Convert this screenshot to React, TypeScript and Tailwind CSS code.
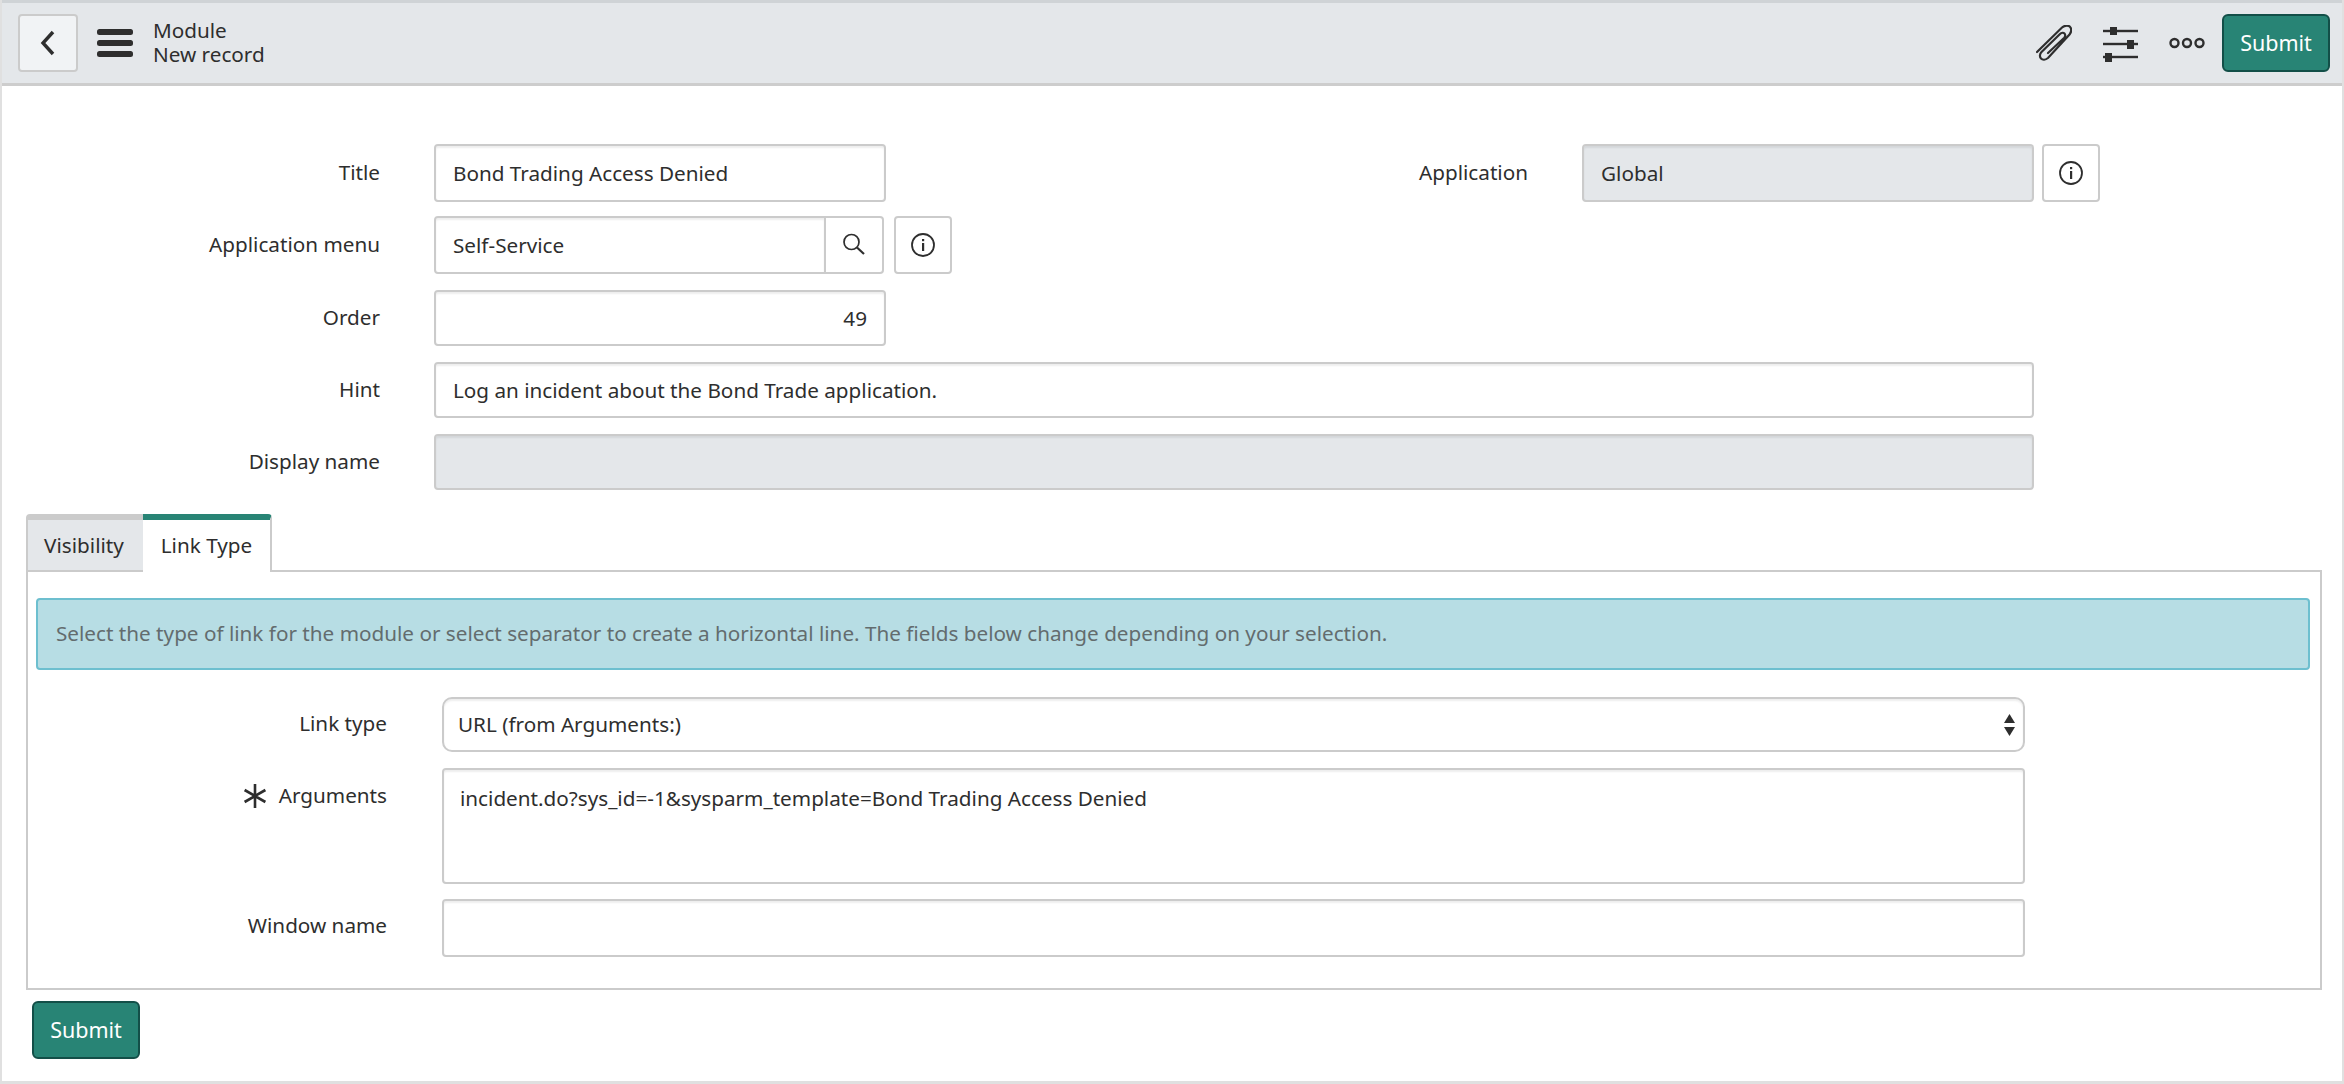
import type { ReactNode } from 'react';

const inputClass =
  'h-full rounded-[4px] border-2 border-[#cbcbcb] px-[17px] text-[20.7px] text-[#2e2e2e] shadow-[inset_0_2px_2px_rgba(0,0,0,0.07)] outline-none';

function InfoIcon() {
  return (
    <svg width="26" height="26" viewBox="0 0 26 26" fill="none" stroke="#2e2e2e">
      <circle cx="13" cy="13" r="11" strokeWidth="1.8" />
      <rect x="12" y="11" width="2.2" height="8" fill="#2e2e2e" stroke="none" />
      <rect x="12" y="7" width="2.2" height="2.2" fill="#2e2e2e" stroke="none" />
    </svg>
  );
}

function InfoButton() {
  return (
    <button className="flex h-[58px] w-[58px] items-center justify-center rounded-[4px] border-2 border-[#cbcbcb] bg-white">
      <InfoIcon />
    </button>
  );
}

function SubmitButton() {
  return (
    <button className="h-[58px] w-[108px] rounded-[6px] border-2 border-[#134f48] bg-[#288475] text-[21.5px] text-white">
      Submit
    </button>
  );
}

function Row({ label, height, children }: { label: string; height: string; children: ReactNode }) {
  return (
    <div className={`flex items-center ${height}`}>
      <label className="w-[378px] shrink-0 text-right text-[20.7px] text-[#2e2e2e]">{label}</label>
      <div className="ml-[54px] flex h-full items-stretch">{children}</div>
    </div>
  );
}

function TabRow({ label, height, children }: { label: ReactNode; height: string; children: ReactNode }) {
  return (
    <div className="flex items-start">
      <div className="flex h-[54px] w-[351px] shrink-0 items-center justify-end text-[20.7px] text-[#2e2e2e]">{label}</div>
      <div className={`ml-[55px] w-[1583px] ${height}`}>{children}</div>
    </div>
  );
}

export default function App() {
  return (
    <div
      className="flex h-[1084px] w-full flex-col border-x-2 border-b-[3px] border-[#e0e0e0] bg-white"
      style={{ fontFamily: '"Noto Sans", sans-serif' }}
    >
      <header className="flex h-[86px] shrink-0 items-center border-y-[3px] border-t-[#cfd3d6] border-b-[#cdcdcd] bg-[#e4e7ea] pl-[16px] pr-[12px]">
        <button className="flex h-[58px] w-[60px] items-center justify-center rounded-[4px] border-2 border-[#cbcbcb] bg-[#f1f3f5]">
          <svg width="18" height="26" viewBox="0 0 18 26" fill="none" stroke="#2e2e2e" strokeWidth="3.4">
            <path d="M14 2 4 13l10 11" />
          </svg>
        </button>
        <svg className="ml-[19px]" width="36" height="28" viewBox="0 0 36 28" fill="#2e2e2e">
          <rect y="0" width="36" height="6" rx="2.5" />
          <rect y="11" width="36" height="6" rx="2.5" />
          <rect y="22" width="36" height="6" rx="2.5" />
        </svg>
        <div className="-mt-[3px] ml-[20px] text-[20.7px] leading-[24px] text-[#2e2e2e]">
          <div>Module</div>
          <div>New record</div>
        </div>
        <div className="ml-auto flex items-center">
          <svg width="36" height="36" viewBox="0 0 36 36" fill="none" stroke="#2e2e2e" strokeWidth="2.2" strokeLinecap="round">
            <path d="M1 27 26 2.500c3-2.500 7-2.500 8.500 0s.5 5-1 7L12 33c-2.500 2-5.500 2-7 .5s-1.500-4.500.5-6.500L24 9c1.500-1.500 3.500-1.500 4.500-.5s1 3-.5 4.500L12 28" />
          </svg>
          <svg className="ml-[31px]" width="36" height="40" viewBox="0 0 36 40" fill="#2e2e2e">
            <rect y="6.800" width="35" height="2.400" />
            <rect x="7" y="4" width="7" height="8" />
            <rect y="19.800" width="35" height="2.400" />
            <rect x="24" y="17" width="7" height="9" />
            <rect y="32.800" width="35" height="2.400" />
            <rect x="2" y="30" width="7" height="9" />
          </svg>
          <svg className="ml-[30px]" width="36" height="12" viewBox="0 0 36 12" fill="none" stroke="#2e2e2e" strokeWidth="2.400">
            <circle cx="5.500" cy="6" r="4" />
            <circle cx="18" cy="6" r="4" />
            <circle cx="30.500" cy="6" r="4" />
          </svg>
          <div className="ml-[17px]">
            <SubmitButton />
          </div>
        </div>
      </header>

      <div className="flex flex-col pt-[58px]">
        <div className="flex h-[58px]">
          <div className="w-[1150px]">
            <Row label="Title" height="h-[58px]">
              <input readOnly value="Bond Trading Access Denied" className={`${inputClass} w-[452px] bg-white`} />
            </Row>
          </div>
          <label className="flex w-[376px] items-center justify-end text-[20.7px] text-[#2e2e2e]">Application</label>
          <input readOnly value="Global" className={`${inputClass} ml-[54px] w-[452px] bg-[#e4e7ea]`} />
          <div className="ml-[8px]">
            <InfoButton />
          </div>
        </div>

        <div className="mt-[14px]">
          <Row label="Application menu" height="h-[58px]">
            <div className="flex w-[450px]">
              <input readOnly value="Self-Service" className={`${inputClass} w-[392px] rounded-r-none bg-white`} />
              <button className="flex w-[58px] items-center justify-center rounded-r-[4px] border-2 border-l-0 border-[#cbcbcb] bg-white">
                <svg width="26" height="26" viewBox="0 0 26 26" fill="none" stroke="#2e2e2e" strokeWidth="1.7">
                  <circle cx="10.500" cy="10" r="7.500" />
                  <path d="m16 15.500 7 6.500" strokeWidth="2.200" />
                </svg>
              </button>
            </div>
            <div className="ml-[10px]">
              <InfoButton />
            </div>
          </Row>
        </div>

        <div className="mt-[16px]">
          <Row label="Order" height="h-[56px]">
            <input readOnly value="49" className={`${inputClass} w-[452px] bg-white text-right`} />
          </Row>
        </div>
        <div className="mt-[16px]">
          <Row label="Hint" height="h-[56px]">
            <input readOnly value="Log an incident about the Bond Trade application." className={`${inputClass} w-[1600px] bg-white`} />
          </Row>
        </div>
        <div className="mt-[16px]">
          <Row label="Display name" height="h-[56px]">
            <input readOnly value="" className={`${inputClass} w-[1600px] bg-[#e4e7ea]`} />
          </Row>
        </div>
      </div>

      <div className="ml-[24px] mr-[20px] mt-[24px] flex flex-col">
        <div className="relative z-10 flex h-[58px] items-stretch text-[20.7px] text-[#2e2e2e]">
          <div className="flex w-[119px] items-center justify-center rounded-tl-[4px] border-x-2 border-t-[6px] border-b-2 border-x-[#cbcbcb] border-t-[#cbcbcb] border-b-[#cbcbcb] bg-[#e4e7ea] pr-[3px] pt-[2px]">
            Visibility
          </div>
          <div className="-ml-[2px] flex w-[129px] items-center justify-center rounded-tr-[4px] border-r-2 border-t-[6px] border-r-[#cbcbcb] border-t-[#288475] bg-white">
            Link Type
          </div>
        </div>
        <div className="-mt-[2px] flex h-[420px] flex-col border-2 border-[#cbcbcb] pl-[8px] pr-[10px] pt-[26px]">
          <div className="flex h-[72px] shrink-0 items-center rounded-[4px] border-2 border-[#6dbfcf] bg-[#b7dde4] px-[18px] text-[20.7px] text-[#636c6e]">
            Select the type of link for the module or select separator to create a horizontal line. The fields below change depending on your selection.
          </div>
          <div className="mt-[27px] flex flex-col">
            <TabRow label="Link type" height="h-[55px]">
              <div className="flex h-full items-center justify-between rounded-[10px] border-2 border-[#cbcbcb] bg-white pl-[14px] pr-[8px] text-[20.7px] text-[#2e2e2e] shadow-[inset_0_2px_2px_rgba(0,0,0,0.07)]">
                <span>URL (from Arguments:)</span>
                <svg width="11" height="22" viewBox="0 0 11 22" fill="#2e2e2e">
                  <path d="M5.500 0 11 9H0z" />
                  <path d="M0 13h11l-5.500 9z" />
                </svg>
              </div>
            </TabRow>
            <div className="mt-[16px]">
              <TabRow
                label={
                  <span className="mt-[2px] flex items-center">
                    <svg width="24" height="24" viewBox="0 0 24 24" fill="none" stroke="#2e2e2e" strokeWidth="2.600" className="mr-[12px]">
                      <path d="M12 0v24M1.600 6l20.800 12M22.400 6 1.600 18" />
                    </svg>
                    Arguments
                  </span>
                }
                height="h-[116px]"
              >
                <textarea
                  readOnly
                  value="incident.do?sys_id=-1&sysparm_template=Bond Trading Access Denied"
                  className={`${inputClass} w-full resize-none bg-white pl-[16px] pt-[13px]`}
                />
              </TabRow>
            </div>
            <div className="mt-[15px]">
              <TabRow label="Window name" height="h-[58px]">
                <input readOnly value="" className={`${inputClass} w-full bg-white`} />
              </TabRow>
            </div>
          </div>
        </div>
        <div className="ml-[6px] mt-[11px]">
          <SubmitButton />
        </div>
      </div>
    </div>
  );
}
